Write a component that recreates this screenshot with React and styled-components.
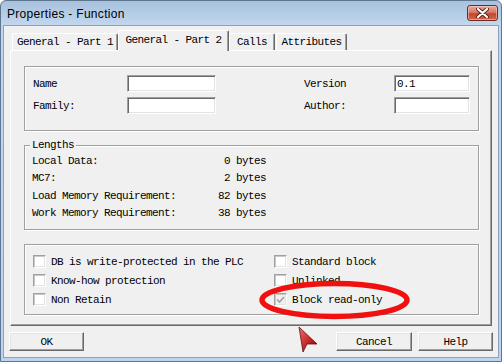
import React from 'react';
import styled, { createGlobalStyle } from 'styled-components';

const GlobalStyle = createGlobalStyle`
  html, body {
    margin: 0;
    padding: 0;
    background: #ffffff;
  }
  body {
    width: 502px;
    height: 362px;
    overflow: hidden;
  }
`;

const Window = styled.div`
  position: relative;
  width: 502px;
  height: 362px;
  box-sizing: border-box;
  display: flex;
  flex-direction: column;
  padding: 0 2px 3px;
  border: 1px solid #5f7690;
  border-radius: 6px 6px 0 0;
  background: linear-gradient(#a8c1dd 0, #c2d7ee 24px, #bcd4ec 100%);
  font-family: "Liberation Mono", "DejaVu Sans Mono", monospace;
  font-size: 11px;
  letter-spacing: -0.6px;
  color: #000;
`;

const TitleBar = styled.div`
  height: 24px;
  display: flex;
  align-items: flex-start;
  justify-content: space-between;
  padding: 0 1px 0 4px;
`;

const Title = styled.span`
  font-family: "Liberation Sans", Arial, sans-serif;
  font-size: 12px;
  letter-spacing: 0.3px;
  line-height: 26px;
  color: #000;
`;

const CloseButton = styled.div`
  margin-top: 4px;
  width: 31px;
  height: 16px;
  box-sizing: border-box;
  display: flex;
  align-items: center;
  justify-content: center;
  border: 1px solid #6e2a20;
  border-radius: 3px;
  background: linear-gradient(#e9a999 0%, #d8796a 45%, #c4472f 55%, #d2644d 100%);
  box-shadow: inset 0 0 0 1px rgba(255, 220, 210, 0.5);
`;

const Client = styled.div`
  flex: 1;
  display: flex;
  flex-direction: column;
  padding: 4px 6px 0;
  border: 1px solid #8aa2bd;
  background: #f0f0f0;
`;

const TabStrip = styled.div`
  height: 20px;
  display: flex;
  align-items: flex-end;
  padding-left: 2px;
  position: relative;
  z-index: 1;
`;

const Tab = styled.div`
  box-sizing: border-box;
  width: ${p => p.$w}px;
  height: ${p => (p.$active ? 21 : 17)}px;
  margin-bottom: ${p => (p.$active ? -1 : 0)}px;
  margin-right: ${p => p.$gap || 0}px;
  display: flex;
  justify-content: center;
  align-items: center;
  padding-bottom: ${p => (p.$active ? 2 : 0)}px;
  background: #f0f0f0;
  border-top: 1px solid #ffffff;
  border-left: 1px solid #ffffff;
  border-right: 1px solid #696969;
  border-radius: 2px 2px 0 0;
  box-shadow: inset -1px 0 0 #a0a0a0;
  white-space: pre;
`;

const TabPanel = styled.div`
  box-sizing: border-box;
  height: 276px;
  display: flex;
  flex-direction: column;
  gap: 14px;
  padding: 15px 12px 9px 13px;
  border-top: 1px solid #ffffff;
  border-left: 1px solid #ffffff;
  border-right: 1px solid #696969;
  border-bottom: 1px solid #696969;
  box-shadow: inset -1px -1px 0 #a0a0a0;
`;

const Group = styled.div`
  position: relative;
  box-sizing: border-box;
  height: ${p => p.$h}px;
  border: 1px solid #a0a0a0;
  box-shadow: inset 1px 1px 0 #ffffff, 1px 1px 0 #ffffff;
`;

const Legend = styled.span`
  position: absolute;
  top: -8px;
  left: 5px;
  padding: 0 2px 0 2px;
  line-height: 14px;
  background: #f0f0f0;
`;

const InfoGrid = styled.div`
  display: grid;
  grid-template-columns: 94px 89px 1fr 90px 76px;
  grid-auto-rows: 17px;
  row-gap: 5px;
  align-items: center;
  padding: 8px 8px 0 8px;
`;

const Label = styled.span`
  white-space: pre;
`;

const TextInput = styled.div`
  box-sizing: border-box;
  height: 17px;
  padding: 1px 2px 0;
  line-height: 14px;
  background: #ffffff;
  border-top: 1px solid #a0a0a0;
  border-left: 1px solid #a0a0a0;
  border-right: 1px solid #ffffff;
  border-bottom: 1px solid #ffffff;
  box-shadow: inset 1px 1px 0 #696969, inset -1px -1px 0 #e3e3e3;
`;

const LengthList = styled.div`
  padding: 6px 0 0 7px;
`;

const LengthRow = styled.div`
  height: 17.5px;
  display: flex;
  align-items: center;
`;

const LengthName = styled.span`
  width: 168px;
  white-space: pre;
`;

const LengthValue = styled.span`
  width: 30px;
  text-align: right;
`;

const LengthUnit = styled.span`
  margin-left: 6px;
`;

const OptionGrid = styled.div`
  display: grid;
  grid-template-columns: 241px 1fr;
  grid-auto-rows: 19px;
  align-items: center;
  padding: 7px 0 0 8px;
`;

const Option = styled.div`
  display: flex;
  align-items: center;
  gap: 5px;
  white-space: pre;
`;

const CheckBox = styled.span`
  box-sizing: border-box;
  width: 13px;
  height: 13px;
  display: flex;
  align-items: center;
  justify-content: center;
  background: ${p => (p.$disabled ? '#f0f0f0' : '#ffffff')};
  border-top: 1px solid #a0a0a0;
  border-left: 1px solid #a0a0a0;
  border-right: 1px solid #ffffff;
  border-bottom: 1px solid #ffffff;
  box-shadow: inset 1px 1px 0 #c8c8c8, inset -1px -1px 0 #e3e3e3;
`;

const ButtonRow = styled.div`
  display: flex;
  gap: 6px;
  margin: 6px -1px 0;
`;

const Spacer = styled.div`
  flex: 1;
`;

const Button = styled.div`
  box-sizing: border-box;
  width: ${p => p.$w || 75}px;
  height: 19px;
  display: flex;
  align-items: center;
  justify-content: center;
  border-top: 1px solid #ffffff;
  border-left: 1px solid #ffffff;
  border-right: 1px solid #696969;
  border-bottom: 1px solid #696969;
  box-shadow: inset -1px -1px 0 #a0a0a0, inset 1px 1px 0 #e3e3e3;
  background: #f0f0f0;
`;

const Overlay = styled.svg`
  position: absolute;
  left: -1px;
  top: -1px;
  pointer-events: none;
`;

const tabs = [
  { label: 'General - Part 1', w: 106 },
  { label: 'General - Part 2', w: 111, active: true },
  { label: 'Calls', w: 46, gap: 1 },
  { label: 'Attributes', w: 71 },
];

const lengths = [
  ['Local Data:', 0],
  ['MC7:', 2],
  ['Load Memory Requirement:', 82],
  ['Work Memory Requirement:', 38],
];

const options = [
  { label: 'DB is write-protected in the PLC' },
  { label: 'Standard block' },
  { label: 'Know-how protection' },
  { label: 'Unlinked' },
  { label: 'Non Retain' },
  { label: 'Block read-only', checked: true, disabled: true },
];

function CloseGlyph() {
  return (
    <svg width="13" height="10" viewBox="0 0 13 10">
      <path d="M2 1 L11 9 M11 1 L2 9" stroke="#5a1f18" strokeWidth="4" strokeLinecap="round" />
      <path d="M2 1 L11 9 M11 1 L2 9" stroke="#ffffff" strokeWidth="2.2" strokeLinecap="round" />
    </svg>
  );
}

function CheckMark() {
  return (
    <svg width="9" height="8" viewBox="0 0 9 8">
      <path d="M1 3.5 L3.5 6 L8 1" fill="none" stroke="#a0a0a0" strokeWidth="1.6" />
    </svg>
  );
}

export default function App() {
  return (
    <>
      <GlobalStyle />
      <Window>
        <TitleBar>
          <Title>Properties - Function</Title>
          <CloseButton>
            <CloseGlyph />
          </CloseButton>
        </TitleBar>
        <Client>
          <TabStrip>
            {tabs.map(t => (
              <Tab key={t.label} $w={t.w} $active={t.active} $gap={t.gap}>
                {t.label}
              </Tab>
            ))}
          </TabStrip>
          <TabPanel>
            <Group $h={65}>
              <InfoGrid>
                <Label>Name</Label>
                <TextInput />
                <span />
                <Label>Version</Label>
                <TextInput>0.1</TextInput>
                <Label>Family:</Label>
                <TextInput />
                <span />
                <Label>Author:</Label>
                <TextInput />
              </InfoGrid>
            </Group>
            <Group $h={85}>
              <Legend>Lengths</Legend>
              <LengthList>
                {lengths.map(([name, value]) => (
                  <LengthRow key={name}>
                    <LengthName>{name}</LengthName>
                    <LengthValue>{value}</LengthValue>
                    <LengthUnit>bytes</LengthUnit>
                  </LengthRow>
                ))}
              </LengthList>
            </Group>
            <Group $h={71}>
              <OptionGrid>
                {options.map(o => (
                  <Option key={o.label}>
                    <CheckBox $disabled={o.disabled}>{o.checked && <CheckMark />}</CheckBox>
                    {o.label}
                  </Option>
                ))}
              </OptionGrid>
            </Group>
          </TabPanel>
          <ButtonRow>
            <Button>OK</Button>
            <Spacer />
            <Button $w={76}>Cancel</Button>
            <Button>Help</Button>
          </ButtonRow>
        </Client>
        <Overlay width="502" height="362" viewBox="0 0 502 362">
          <defs>
            <linearGradient id="cursorFill" x1="0" y1="0" x2="1" y2="1">
              <stop offset="0" stopColor="#f07070" />
              <stop offset="0.6" stopColor="#c02020" />
              <stop offset="1" stopColor="#7a0c0c" />
            </linearGradient>
          </defs>
          <ellipse cx="334.5" cy="300" rx="72.5" ry="16.5" fill="none" stroke="#f01010" strokeWidth="5.5" />
          <polygon points="299,327 317,344 307,344 303,352" fill="url(#cursorFill)" stroke="#6a0a0a" strokeWidth="0.8" />
        </Overlay>
      </Window>
    </>
  );
}
